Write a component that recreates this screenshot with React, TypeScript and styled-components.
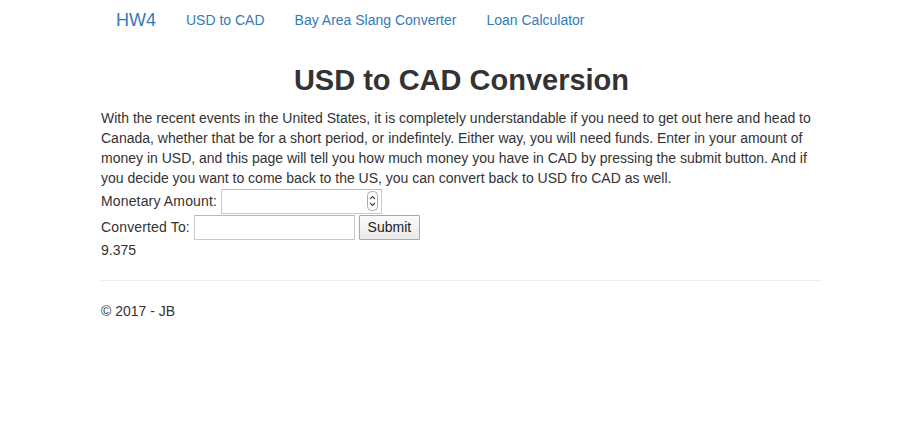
import React from "react";
import styled, { createGlobalStyle } from "styled-components";

const Global = createGlobalStyle`
  html, body { margin: 0; padding: 0; background: #fff; }
  body {
    font-family: "Liberation Sans", Arial, sans-serif;
    font-size: 14px;
    line-height: 20px;
    color: #333;
  }
`;

const Navbar = styled.nav`
  height: 40px;
  display: flex;
  align-items: center;
  padding-left: 101px;
`;

const Brand = styled.a`
  font-size: 18px;
  line-height: 20px;
  color: #337ab7;
  padding: 0 15px;
  text-decoration: none;
`;

const NavLink = styled.a`
  font-size: 14px;
  color: #337ab7;
  padding: 0 15px;
  text-decoration: none;
`;

const Container = styled.main`
  margin-left: 101px;
  width: 721px;
`;

const Title = styled.h2`
  margin: 24px 0 11px;
  font-size: 29px;
  line-height: 33px;
  font-weight: 700;
  text-align: center;
  color: #333;
`;

const Para = styled.p`
  margin: 0;
`;

const Row = styled.div`
  display: flex;
  align-items: center;
  height: 26px;
  gap: 4px;
`;

const Label = styled.span`
  letter-spacing: 0.15px;
`;

const Field = styled.span`
  position: relative;
  display: inline-flex;
`;

const Input = styled.input`
  box-sizing: border-box;
  width: 161px;
  height: 25px;
  border: 1px solid #c9c9c9;
  border-top-color: #b9b9b9;
  padding: 2px 4px;
  font-family: inherit;
  font-size: 14px;
  background: #fff;
  outline: none;
`;

const Spinner = styled.svg`
  position: absolute;
  right: 4px;
  top: 2px;
`;

const Button = styled.button`
  box-sizing: border-box;
  width: 61px;
  height: 25px;
  border: 1px solid #a9a9a9;
  border-radius: 1px;
  background: linear-gradient(#fbfbfb, #e9e9e9);
  font-family: inherit;
  font-size: 14px;
  color: #222;
  padding: 0;
`;

const Result = styled.div`
  height: 20px;
`;

const Rule = styled.hr`
  margin: 20px 0 20px;
  border: 0;
  border-top: 1px solid #eee;
`;

const Footer = styled.footer`
  p { margin: 0; }
`;

export default function App() {
  return (
    <>
      <Global />
      <Navbar>
        <Brand href="#">HW4</Brand>
        <NavLink href="#">USD to CAD</NavLink>
        <NavLink href="#">Bay Area Slang Converter</NavLink>
        <NavLink href="#">Loan Calculator</NavLink>
      </Navbar>
      <Container>
        <Title>USD to CAD Conversion</Title>
        <Para>
          With the recent events in the United States, it is completely understandable if you need to get out here and head to
          Canada, whether that be for a short period, or indefintely. Either way, you will need funds. Enter in your amount of
          money in USD, and this page will tell you how much money you have in CAD by pressing the submit button. And if
          you decide you want to come back to the US, you can convert back to USD fro CAD as well.
        </Para>
        <Row>
          <Label>Monetary Amount:</Label>
          <Field>
            <Input type="text" />
            <Spinner width="11" height="20" viewBox="0 0 11 20">
              <rect x="0.5" y="0.5" width="10" height="19" rx="4" fill="#fff" stroke="#aaa" />
              <path d="M3 8 L5.5 5.5 L8 8" fill="none" stroke="#444" strokeWidth="1.1" />
              <path d="M3 12 L5.5 14.5 L8 12" fill="none" stroke="#444" strokeWidth="1.1" />
            </Spinner>
          </Field>
        </Row>
        <Row>
          <Label>Converted To:</Label>
          <Input type="text" />
          <Button type="button">Submit</Button>
        </Row>
        <Result>9.375</Result>
        <Rule />
        <Footer>
          <p>© 2017 - JB</p>
        </Footer>
      </Container>
    </>
  );
}
